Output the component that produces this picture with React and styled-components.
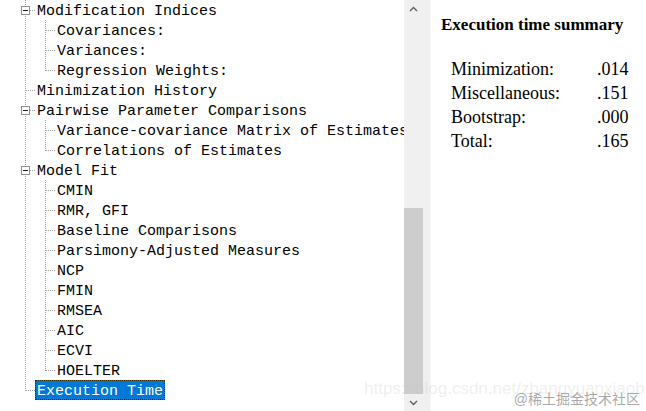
import React from "react";
import styled, { createGlobalStyle } from "styled-components";

const GlobalStyle = createGlobalStyle`
  html, body {
    margin: 0;
    padding: 0;
    background: #ffffff;
  }
`;

const tree = [
  {
    label: "Modification Indices",
    open: true,
    children: [
      { label: "Covariances:" },
      { label: "Variances:" },
      { label: "Regression Weights:" },
    ],
  },
  { label: "Minimization History" },
  {
    label: "Pairwise Parameter Comparisons",
    open: true,
    children: [
      { label: "Variance-covariance Matrix of Estimates" },
      { label: "Correlations of Estimates" },
    ],
  },
  {
    label: "Model Fit",
    open: true,
    children: [
      { label: "CMIN" },
      { label: "RMR, GFI" },
      { label: "Baseline Comparisons" },
      { label: "Parsimony-Adjusted Measures" },
      { label: "NCP" },
      { label: "FMIN" },
      { label: "RMSEA" },
      { label: "AIC" },
      { label: "ECVI" },
      { label: "HOELTER" },
    ],
  },
  { label: "Execution Time", selected: true },
];

const flatten = (nodes, prefix = []) =>
  nodes.flatMap((node, i) => {
    const last = i === nodes.length - 1;
    const guides = [...prefix.map((l) => (l ? "blank" : "pipe")), last ? "elbow" : "tee"];
    const row = { ...node, guides };
    return node.children ? [row, ...flatten(node.children, [...prefix, last])] : [row];
  });

const rows = flatten(tree);

const summary = [
  ["Minimization:", ".014"],
  ["Miscellaneous:", ".151"],
  ["Bootstrap:", ".000"],
  ["Total:", ".165"],
];

const dotsV = "repeating-linear-gradient(to bottom, #a0a0a0 0 1px, transparent 1px 2px)";
const dotsH = "repeating-linear-gradient(to right, #a0a0a0 0 1px, transparent 1px 2px)";

const Window = styled.div`
  width: 646px;
  height: 411px;
  display: flex;
  overflow: hidden;
  position: relative;
  background: #ffffff;
`;

const TreePane = styled.div`
  width: 404px;
  height: 411px;
  overflow: hidden;
  display: flex;
  flex-direction: column;
  padding-left: 15px;
  box-sizing: border-box;
  white-space: nowrap;
`;

const Row = styled.div`
  height: 20px;
  display: flex;
  align-items: center;
`;

const Guide = styled.div`
  width: 20px;
  height: 20px;
  flex: none;
  position: relative;

  &::before {
    content: "";
    display: ${(p) => (p.$kind === "blank" ? "none" : "block")};
    position: absolute;
    left: 10px;
    top: 0;
    width: 1px;
    height: ${(p) => (p.$kind === "elbow" ? "11px" : "20px")};
    background: ${dotsV};
  }

  &::after {
    content: "";
    display: ${(p) => (p.$kind === "tee" || p.$kind === "elbow" ? "block" : "none")};
    position: absolute;
    left: 11px;
    top: 10px;
    width: 9px;
    height: 1px;
    background: ${dotsH};
  }
`;

const ExpandBox = styled.span`
  position: absolute;
  left: 6px;
  top: 6px;
  width: 9px;
  height: 9px;
  box-sizing: border-box;
  border: 1px solid #919191;
  background: #ffffff;
  z-index: 1;

  &::after {
    content: "";
    position: absolute;
    left: 1px;
    top: 3px;
    width: 5px;
    height: 1px;
    background: #222222;
  }
`;

const Label = styled.span`
  font-family: "Liberation Mono", "DejaVu Sans Mono", monospace;
  font-size: 15px;
  line-height: 20px;
  height: 20px;
  padding: 2px 2px 0 2px;
  box-sizing: border-box;
  overflow: hidden;
  color: ${(p) => (p.$selected ? "#ffffff" : "#000000")};
  background: ${(p) => (p.$selected ? "#0078d7" : "transparent")};
  outline: ${(p) => (p.$selected ? "1px dotted #3a3000" : "none")};
  outline-offset: -1px;
`;

const ScrollBar = styled.div`
  width: 19px;
  height: 411px;
  flex: none;
  background: #f0f0f0;
  display: flex;
  flex-direction: column;
`;

const ArrowButton = styled.div`
  height: 17px;
  flex: none;
  display: flex;
  align-items: center;
  justify-content: center;
`;

const Track = styled.div`
  flex: 1;
  display: flex;
  flex-direction: column;
  justify-content: flex-end;
`;

const Thumb = styled.div`
  height: 186px;
  background: #cdcdcd;
`;

const Splitter = styled.div`
  width: 7px;
  flex: none;
  background: #f0f0f0;
  border-right: 1px solid #f7f7f7;
`;

const SummaryPane = styled.div`
  flex: 1;
  padding: 16px 0 0 10px;
  font-family: "Liberation Serif", "Times New Roman", serif;
  color: #000000;
`;

const Heading = styled.div`
  font-size: 17px;
  font-weight: bold;
  line-height: 18px;
`;

const Table = styled.div`
  margin: 23px 0 0 10px;
  display: grid;
  grid-template-columns: 146px auto;
  font-size: 18px;
  line-height: 24px;
`;

const UrlMark = styled.div`
  position: absolute;
  left: 364px;
  top: 379px;
  font-family: "Liberation Sans", Arial, sans-serif;
  font-size: 17px;
  color: rgba(200, 200, 200, 0.3);
  white-space: nowrap;
  pointer-events: none;
`;

const SiteMark = styled.div`
  position: absolute;
  right: 6px;
  bottom: 3px;
  font-family: "Liberation Sans", "Noto Sans CJK SC", sans-serif;
  font-size: 14px;
  color: rgba(140, 140, 140, 0.75);
  white-space: nowrap;
  pointer-events: none;
`;

const Chevron = ({ up }) => (
  <svg width="9" height="6" viewBox="0 0 9 6">
    <path
      d={up ? "M1 5 L4.5 1.5 L8 5" : "M1 1 L4.5 4.5 L8 1"}
      fill="none"
      stroke="#606060"
      strokeWidth="1.4"
    />
  </svg>
);

export default function App() {
  return (
    <>
      <GlobalStyle />
      <Window>
        <TreePane>
          {rows.map((r) => (
            <Row key={r.label}>
              {r.guides.map((g, i) => (
                <Guide key={i} $kind={g}>
                  {i === r.guides.length - 1 && r.children && <ExpandBox />}
                </Guide>
              ))}
              <Label $selected={r.selected}>{r.label}</Label>
            </Row>
          ))}
        </TreePane>
        <ScrollBar>
          <ArrowButton>
            <Chevron up />
          </ArrowButton>
          <Track>
            <Thumb />
          </Track>
          <ArrowButton>
            <Chevron />
          </ArrowButton>
        </ScrollBar>
        <Splitter />
        <SummaryPane>
          <Heading>Execution time summary</Heading>
          <Table>
            {summary.map(([k, v]) => (
              <React.Fragment key={k}>
                <span>{k}</span>
                <span>{v}</span>
              </React.Fragment>
            ))}
          </Table>
        </SummaryPane>
        <UrlMark>https://blog.csdn.net/zhangyuanxiaobb</UrlMark>
        <SiteMark>@稀土掘金技术社区</SiteMark>
      </Window>
    </>
  );
}
